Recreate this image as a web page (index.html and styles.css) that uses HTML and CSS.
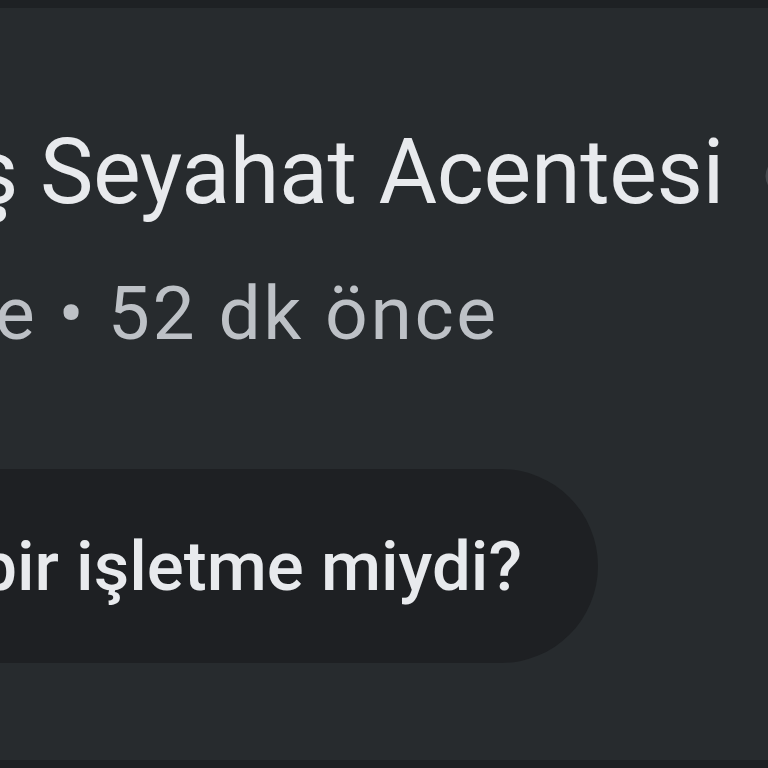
FILE: index.html
```html
<!DOCTYPE html>
<html lang="tr">
<head>
    <meta charset="UTF-8">
    <meta name="viewport" content="width=device-width, initial-scale=1.0">
    <title>Seyahat Acentesi</title>
    <link rel="stylesheet" href="styles.css">
</head>
<body>
    <div class="top-bar"></div>

    <main class="place">
        <div class="place-head">
            <h1 class="place-name">ş Seyahat Acentesi</h1>
            <svg class="place-badge" width="40" height="40" viewBox="0 0 40 40">
                <circle cx="20" cy="20" r="16" fill="none" stroke="#45494d" stroke-width="5"/>
            </svg>
        </div>
        <p class="place-meta">e • 52 dk önce</p>

        <div class="question-row">
            <button class="question">bir işletme miydi?</button>
        </div>
    </main>

    <div class="bottom-bar"></div>
</body>
</html>
```

FILE: styles.css
```css
* {
    margin: 0;
    padding: 0;
    box-sizing: border-box;
}

body {
    height: 100vh;
    overflow: hidden;
    display: flex;
    flex-direction: column;
    background-color: #272b2e;
    font-family: Roboto, "Noto Sans", sans-serif;
    color: #e8eaed;
}

.top-bar {
    height: 8px;
    background-color: #1e2124;
}

.bottom-bar {
    height: 8px;
    background-color: #1e2124;
}

.place {
    flex: 1;
    padding-top: 120px;
    overflow: hidden;
}

.place-head {
    display: flex;
    align-items: center;
    gap: 40px;
    margin-left: -28px;
}

.place-name {
    font-size: 90px;
    font-weight: 400;
    line-height: 1;
    letter-spacing: -0.4px;
    white-space: nowrap;
    color: #e8eaed;
}

.place-badge {
    flex-shrink: 0;
    margin-top: 6px;
}

.place-meta {
    font-size: 75px;
    line-height: 1;
    letter-spacing: 2.6px;
    white-space: nowrap;
    margin-top: 58px;
    margin-left: -5px;
    color: #bdc1c6;
}

.question-row {
    margin-top: 118px;
    display: flex;
}

.question {
    height: 194px;
    width: 700px;
    flex-shrink: 0;
    margin-left: -102px;
    padding-right: 76px;
    display: flex;
    align-items: center;
    justify-content: flex-end;
    border: none;
    border-radius: 97px;
    background-color: #1e2023;
    color: #e8eaed;
    font-family: inherit;
    font-size: 69px;
    font-weight: 500;
    white-space: nowrap;
}
```
